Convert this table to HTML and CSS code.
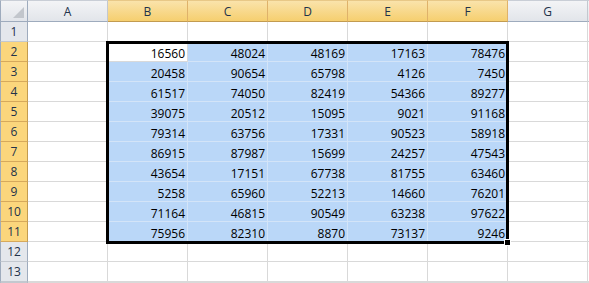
FILE: index.html
```html
<!DOCTYPE html>
<html>
<head>
<meta charset="utf-8">
<link rel="stylesheet" href="styles.css">
</head>
<body>
<div class="sheet">
  <div class="corner"><span class="tri"></span></div>
  <div class="ch">A</div>
  <div class="ch on">B</div>
  <div class="ch on">C</div>
  <div class="ch on">D</div>
  <div class="ch on">E</div>
  <div class="ch on">F</div>
  <div class="ch">G</div>
  <div class="ch"></div>

  <div class="rh">1</div><div class="c"></div><div class="c"></div><div class="c"></div><div class="c"></div><div class="c"></div><div class="c"></div><div class="c"></div><div class="c"></div>

  <div class="rh on">2</div><div class="c"></div><div class="c act">16560</div><div class="c s">48024</div><div class="c s">48169</div><div class="c s">17163</div><div class="c s">78476</div><div class="c"></div><div class="c"></div>
  <div class="rh on">3</div><div class="c"></div><div class="c s">20458</div><div class="c s">90654</div><div class="c s">65798</div><div class="c s">4126</div><div class="c s">7450</div><div class="c"></div><div class="c"></div>
  <div class="rh on">4</div><div class="c"></div><div class="c s">61517</div><div class="c s">74050</div><div class="c s">82419</div><div class="c s">54366</div><div class="c s">89277</div><div class="c"></div><div class="c"></div>
  <div class="rh on">5</div><div class="c"></div><div class="c s">39075</div><div class="c s">20512</div><div class="c s">15095</div><div class="c s">9021</div><div class="c s">91168</div><div class="c"></div><div class="c"></div>
  <div class="rh on">6</div><div class="c"></div><div class="c s">79314</div><div class="c s">63756</div><div class="c s">17331</div><div class="c s">90523</div><div class="c s">58918</div><div class="c"></div><div class="c"></div>
  <div class="rh on">7</div><div class="c"></div><div class="c s">86915</div><div class="c s">87987</div><div class="c s">15699</div><div class="c s">24257</div><div class="c s">47543</div><div class="c"></div><div class="c"></div>
  <div class="rh on">8</div><div class="c"></div><div class="c s">43654</div><div class="c s">17151</div><div class="c s">67738</div><div class="c s">81755</div><div class="c s">63460</div><div class="c"></div><div class="c"></div>
  <div class="rh on">9</div><div class="c"></div><div class="c s">5258</div><div class="c s">65960</div><div class="c s">52213</div><div class="c s">14660</div><div class="c s">76201</div><div class="c"></div><div class="c"></div>
  <div class="rh on">10</div><div class="c"></div><div class="c s">71164</div><div class="c s">46815</div><div class="c s">90549</div><div class="c s">63238</div><div class="c s">97622</div><div class="c"></div><div class="c"></div>
  <div class="rh on">11</div><div class="c"></div><div class="c s">75956</div><div class="c s">82310</div><div class="c s">8870</div><div class="c s">73137</div><div class="c s">9246</div><div class="c"></div><div class="c"></div>

  <div class="rh">12</div><div class="c"></div><div class="c"></div><div class="c"></div><div class="c"></div><div class="c"></div><div class="c"></div><div class="c"></div><div class="c"></div>
  <div class="rh">13</div><div class="c"></div><div class="c"></div><div class="c"></div><div class="c"></div><div class="c"></div><div class="c"></div><div class="c"></div><div class="c"></div>
  <div class="rh"></div><div class="c"></div><div class="c"></div><div class="c"></div><div class="c"></div><div class="c"></div><div class="c"></div><div class="c"></div><div class="c"></div>

  <div class="sel"><span class="handle"></span></div>
</div>
</body>
</html>
```

FILE: styles.css
```css
html, body {
  margin: 0;
  padding: 0;
  background: #fff;
  overflow: hidden;
}
body {
  width: 589px;
  height: 283px;
}
.sheet {
  position: relative;
  width: 589px;
  height: 283px;
  overflow: hidden;
  display: grid;
  grid-template-columns: 28px repeat(7, 80px) 1fr;
  grid-template-rows: 22px repeat(13, 20px) 1fr;
  font-family: "Open Sans", "Liberation Sans", sans-serif;
  font-size: 12px;
  color: #000;
}
.sheet > div {
  box-sizing: border-box;
  overflow: hidden;
  white-space: nowrap;
}
.c {
  border-right: 1px solid #d9d9d9;
  border-bottom: 1px solid #d9d9d9;
  text-align: right;
  padding-right: 2px;
  line-height: 23px;
}
.c.s {
  background: #bad7f8;
  border-color: #d3e4f8;
}
.c.act {
  background: #fff;
}
.corner {
  position: relative;
  background: linear-gradient(#f3f4f6, #e2e5ea);
  border-top: 1px solid #c9ced6;
  border-right: 1px solid #9eabbd;
  border-bottom: 1px solid #9eabbd;
  border-left: 1px solid #9eabbd;
}
.tri {
  position: absolute;
  right: 3px;
  bottom: 3px;
  width: 0;
  height: 0;
  border-left: 11px solid transparent;
  border-bottom: 11px solid #c2c6cc;
}
.ch {
  background: linear-gradient(#f3f4f6, #e2e5ea);
  border-top: 1px solid #c9ced6;
  border-right: 1px solid #c3c8cf;
  border-bottom: 1px solid #9eabbd;
  text-align: center;
  font-size: 12px;
  line-height: 22px;
  color: #22324a;
}
.ch.on {
  background: linear-gradient(#fae3ab, #f6cf6f);
  border-right-color: #dfb26a;
  border-bottom-color: #c29b50;
  border-top-color: #e8c887;
}
.rh {
  background: #e4e7ec;
  border-left: 1px solid #9eabbd;
  border-right: 1px solid #9eabbd;
  border-bottom: 1px solid #c3c8cf;
  text-align: center;
  font-size: 12px;
  line-height: 19px;
  color: #22324a;
}
.rh.on {
  background: #fbd67c;
  border-right-color: #c29b50;
  border-bottom-color: #d6a95c;
}
.sheet > .sel {
  position: absolute;
  grid-column: 3 / 8;
  grid-row: 3 / 13;
  top: -1px;
  left: -2px;
  right: -1px;
  bottom: -2px;
  border: 3px solid #000;
  z-index: 2;
  overflow: visible;
  pointer-events: none;
}
.handle {
  position: absolute;
  right: -5px;
  bottom: -5px;
  width: 5px;
  height: 5px;
  background: #000;
  border: 1px solid #fff;
}
```
